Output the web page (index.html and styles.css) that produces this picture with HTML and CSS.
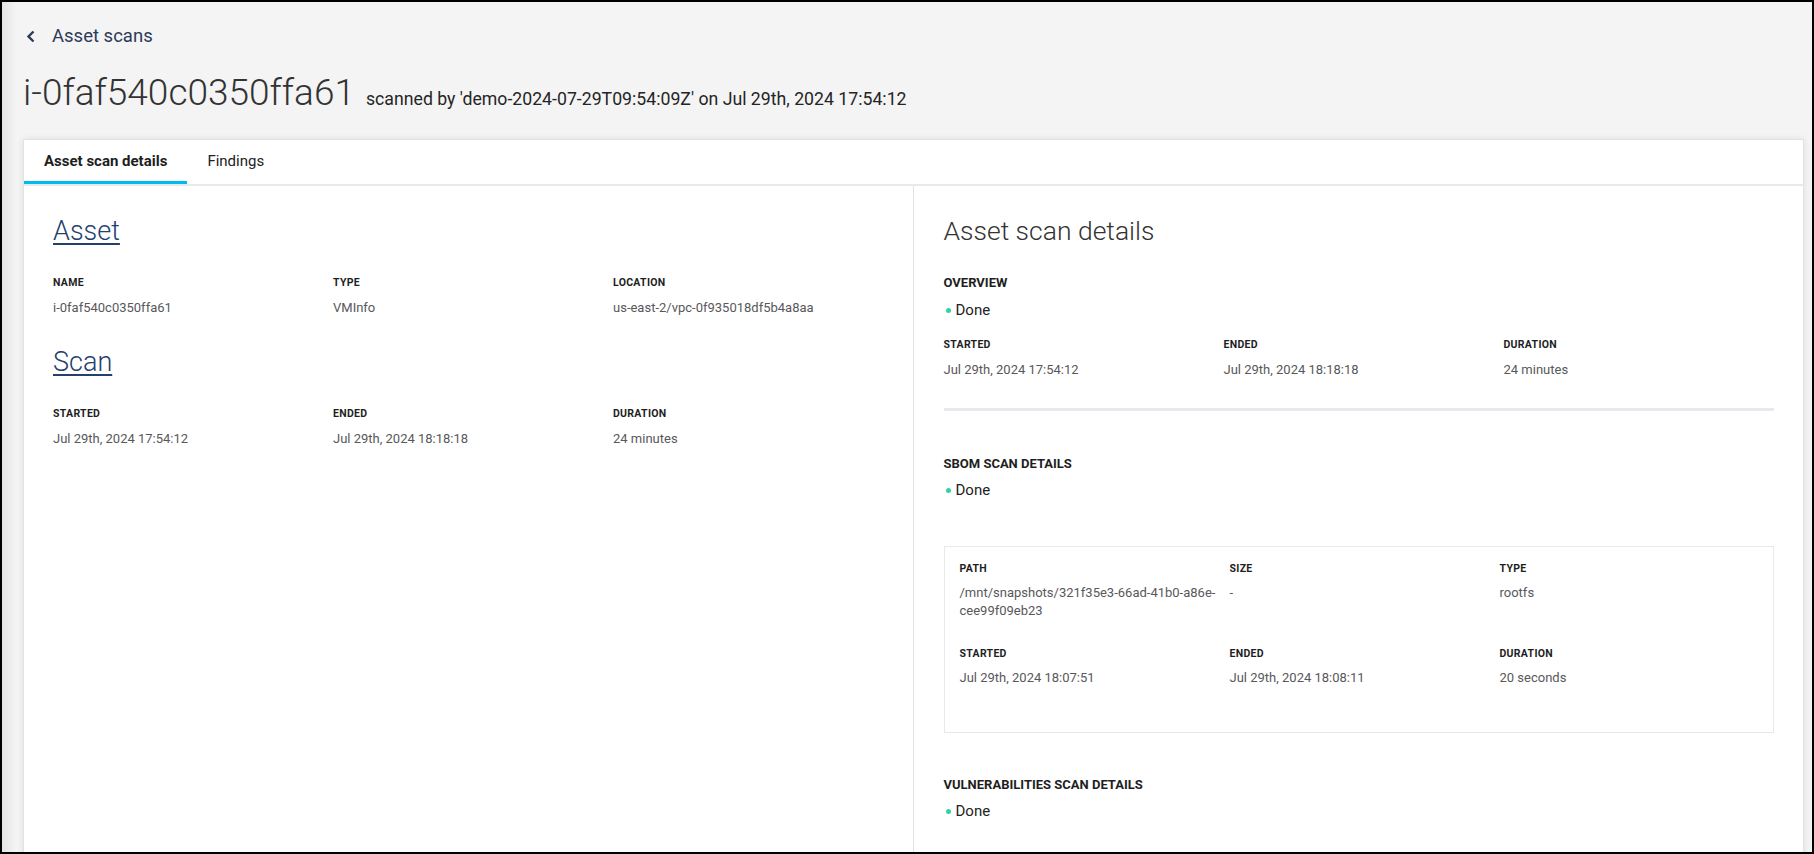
FILE: index.html
```html
<!DOCTYPE html>
<html lang="en">
<head>
<meta charset="utf-8">
<title>Asset scan</title>
<link rel="stylesheet" href="styles.css">
</head>
<body>
<div class="frame">
  <a class="back" href="#">
    <svg class="chev" width="9" height="13" viewBox="0 0 9 13"><polyline points="7.5,1.5 2.5,6.5 7.5,11.5" fill="none" stroke="#2b3a58" stroke-width="2.4"/></svg>
    <span>Asset scans</span>
  </a>
  <div class="title-row">
    <h1 class="title">i-0faf540c0350ffa61</h1>
    <span class="subtitle">scanned by 'demo-2024-07-29T09:54:09Z' on Jul 29th, 2024 17:54:12</span>
  </div>
  <div class="card">
    <div class="tabs">
      <div class="tab active">Asset scan details</div>
      <div class="tab">Findings</div>
    </div>
    <div class="content">
      <div class="col col-left">
        <h2 class="heading link">Asset</h2>
        <div class="fields">
          <div class="field"><div class="label">Name</div><div class="value">i-0faf540c0350ffa61</div></div>
          <div class="field"><div class="label">Type</div><div class="value">VMInfo</div></div>
          <div class="field"><div class="label">Location</div><div class="value">us-east-2/vpc-0f935018df5b4a8aa</div></div>
        </div>
        <h2 class="heading link section-gap">Scan</h2>
        <div class="fields">
          <div class="field"><div class="label">Started</div><div class="value">Jul 29th, 2024 17:54:12</div></div>
          <div class="field"><div class="label">Ended</div><div class="value">Jul 29th, 2024 18:18:18</div></div>
          <div class="field"><div class="label">Duration</div><div class="value">24 minutes</div></div>
        </div>
      </div>
      <div class="col col-right">
        <h2 class="heading">Asset scan details</h2>
        <div class="sec-label">Overview</div>
        <div class="status"><span class="dot"></span>Done</div>
        <div class="fields overview-fields">
          <div class="field"><div class="label">Started</div><div class="value">Jul 29th, 2024 17:54:12</div></div>
          <div class="field"><div class="label">Ended</div><div class="value">Jul 29th, 2024 18:18:18</div></div>
          <div class="field"><div class="label">Duration</div><div class="value">24 minutes</div></div>
        </div>
        <div class="separator"></div>
        <div class="sec-label sbom-label">SBOM scan details</div>
        <div class="status status-tight"><span class="dot"></span>Done</div>
        <div class="box">
          <div class="box-grid">
            <div class="field"><div class="label">Path</div><div class="value">/mnt/snapshots/321f35e3-66ad-41b0-a86e-cee99f09eb23</div></div>
            <div class="field"><div class="label">Size</div><div class="value">-</div></div>
            <div class="field"><div class="label">Type</div><div class="value">rootfs</div></div>
            <div class="field row2"><div class="label">Started</div><div class="value">Jul 29th, 2024 18:07:51</div></div>
            <div class="field row2"><div class="label">Ended</div><div class="value">Jul 29th, 2024 18:08:11</div></div>
            <div class="field row2"><div class="label">Duration</div><div class="value">20 seconds</div></div>
          </div>
        </div>
        <div class="sec-label vuln-label">Vulnerabilities scan details</div>
        <div class="status status-tight"><span class="dot"></span>Done</div>
      </div>
    </div>
  </div>
</div>
</body>
</html>
```

FILE: styles.css
```css
* { box-sizing: border-box; }

html, body {
  margin: 0;
  padding: 0;
}

body {
  font-family: Roboto, "Liberation Sans", Arial, sans-serif;
  color: #222;
}

.frame {
  height: 854px;
  border: 2px solid #000;
  overflow: hidden;
  background: linear-gradient(to right, #e4e4e4 0, #f4f4f4 14px);
  padding: 0 8px 0 21px;
  display: flex;
  flex-direction: column;
}

.back {
  display: flex;
  align-items: center;
  height: 24px;
  margin-top: 23px;
  color: #2b3a58;
  font-size: 18.5px;
  text-decoration: none;
}

.chev {
  margin-left: 3px;
  margin-right: 17px;
}

.title-row {
  display: flex;
  align-items: baseline;
  gap: 11px;
  margin-top: 24px;
}

.title {
  margin: 0;
  font-size: 37px;
  font-weight: 300;
  line-height: 44px;
  color: #333;
}

.subtitle {
  font-size: 17.7px;
  color: #252525;
}

.card {
  margin-top: 24px;
  background: #fff;
  border: 1px solid #e3e3e3;
  box-shadow: 0 0 7px rgba(0, 0, 0, 0.09);
}

.tabs {
  display: flex;
  border-bottom: 2px solid #e6eaee;
}

.tab {
  height: 44px;
  padding: 1px 20px 0;
  display: flex;
  align-items: center;
  font-size: 15px;
  color: #222;
  border-bottom: 3px solid transparent;
}

.tab.active {
  font-weight: 700;
  color: #1e1e1e;
  border-bottom-color: #00bceb;
}

.content {
  display: grid;
  grid-template-columns: minmax(0, 1fr) minmax(0, 1fr);
  min-height: 720px;
}

.col-left {
  border-right: 1px solid #e1e1e1;
  padding: 29px 30px 0 29px;
}

.col-right {
  padding: 29px 29px 0 30px;
}

.heading {
  margin: 0;
  font-size: 26.5px;
  font-weight: 300;
  line-height: 32px;
  color: #333;
}

.heading.link {
  font-size: 27px;
  color: #24406e;
  display: inline-block;
  text-decoration: underline;
  text-decoration-thickness: 2px;
  text-underline-offset: 3px;
}

.section-gap {
  margin-top: 30px;
}

.fields {
  display: grid;
  grid-template-columns: repeat(3, 280px);
  margin-top: 28px;
}

.col-left .fields { margin-top: 29px; }

.label {
  font-size: 10.5px;
  font-weight: 700;
  letter-spacing: 0.3px;
  line-height: 14px;
  text-transform: uppercase;
  color: #1e1e1e;
}

.value {
  margin-top: 10px;
  font-size: 13px;
  line-height: 16px;
  color: #58585b;
}

.sec-label {
  margin-top: 28px;
  font-size: 13px;
  font-weight: 700;
  line-height: 16px;
  text-transform: uppercase;
  color: #1e1e1e;
}

.status {
  display: flex;
  align-items: center;
  margin-top: 10px;
  font-size: 15px;
  line-height: 18px;
  color: #222;
}

.status-tight { margin-top: 9px; }

.dot {
  width: 5px;
  height: 5px;
  border-radius: 50%;
  background: #2ed3a5;
  margin: 1px 5px 0 2px;
}

.overview-fields {
  margin-top: 19px;
}

.separator {
  margin-top: 30px;
  height: 3px;
  background: #e6eaee;
}

.sbom-label { margin-top: 45px; }

.box {
  margin-top: 47px;
  border: 1px solid #e6eaee;
  padding: 15px 0 45px 15px;
}

.box-grid {
  display: grid;
  grid-template-columns: repeat(3, 270px);
}

.box .value {
  margin-top: 8px;
  line-height: 18px;
  padding-right: 10px;
}

.box .row2 {
  margin-top: 27px;
}

.vuln-label { margin-top: 44px; }
```
